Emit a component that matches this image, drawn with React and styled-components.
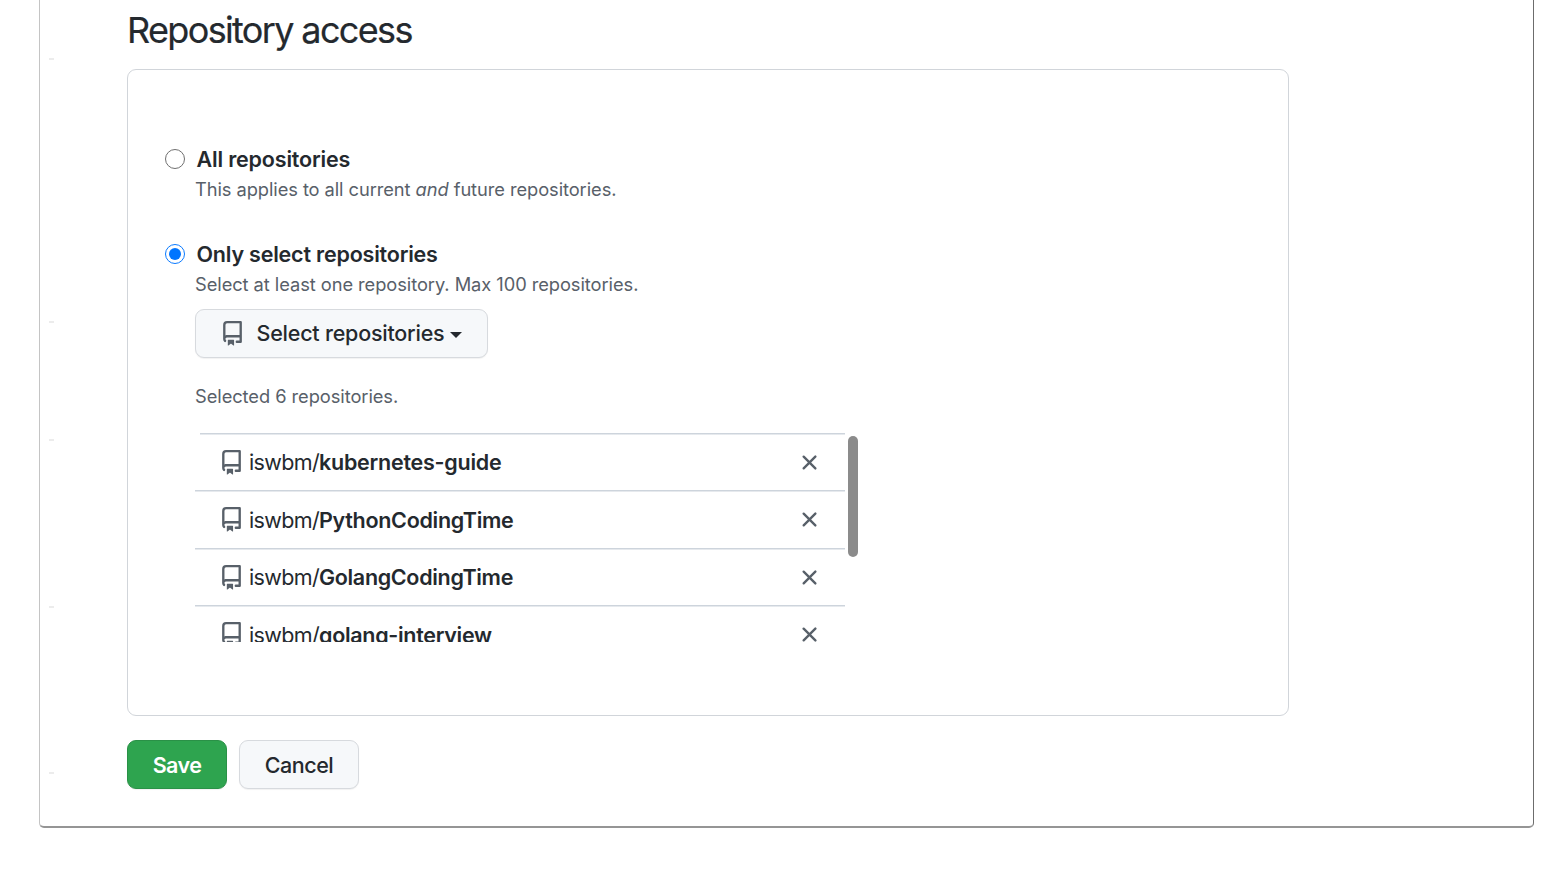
import React from "react";
import styled, { createGlobalStyle } from "styled-components";

const GlobalStyle = createGlobalStyle`
  *, *::before, *::after { box-sizing: border-box; }
  body {
    margin: 0;
    background: #fff;
    color: #24292e;
    font-family: Inter, "Liberation Sans", sans-serif;
    -webkit-font-smoothing: antialiased;
  }
  h2, p, ul { margin: 0; padding: 0; }
`;

const Page = styled.main`
  height: 875px;
  padding: 0 28px 0 39px;
  overflow: hidden;
`;

const Frame = styled.section`
  display: flex;
  height: 828px;
  border: 1px solid #c4c4c4;
  border-top: 0;
  border-right-color: #6c6c6c;
  border-bottom: 2px solid #959595;
  border-radius: 0 0 5px 5px;
`;

const Rail = styled.div`
  width: 87px;
  padding-left: 9px;
`;

const Tick = styled.div`
  width: 5px;
  height: 2px;
  margin-top: ${(p) => p.$gap}px;
  background: #ececec;
`;

const Content = styled.div`
  width: 1162px;
`;

const Title = styled.h2`
  height: 69px;
  padding-top: 7px;
  font-size: 36px;
  font-weight: 400;
  line-height: 46px;
  letter-spacing: -1.65px;
  -webkit-text-stroke: 0.2px #24292e;
`;

const Panel = styled.div`
  height: 647px;
  padding: 71.5px 37px 0 36.5px;
  border: 1px solid #d1d5da;
  border-radius: 9px;
`;

const Option = styled.label`
  display: flex;
  align-items: center;
  gap: 12px;
  height: 34px;
  font-size: 21.5px;
  font-weight: 600;
  letter-spacing: ${(p) => p.$spacing}px;
`;

const Radio = styled.span`
  display: flex;
  align-items: center;
  justify-content: center;
  width: 20px;
  height: 20px;
  border: ${(p) => (p.$checked ? "1.5px solid #0a7aff" : "1.2px solid #6f6f6f")};
  border-radius: 50%;

  &::after {
    content: "";
    width: 12px;
    height: 12px;
    border-radius: 50%;
    background: ${(p) => (p.$checked ? "#0075ff" : "transparent")};
  }
`;

const Note = styled.p`
  height: 26px;
  margin-left: 30.5px;
  color: #586069;
  font-size: 18.3px;
  line-height: 26px;
  letter-spacing: ${(p) => p.$spacing}px;
  white-space: nowrap;
`;

const Gap = styled.div`
  height: ${(p) => p.$size}px;
`;

const Button = styled.button`
  display: flex;
  align-items: center;
  justify-content: center;
  width: ${(p) => p.$width}px;
  height: ${(p) => p.$height || 49}px;
  padding: 0;
  border: 1px solid ${(p) => (p.$primary ? "#2a9147" : "#d7dade")};
  border-radius: 9px;
  background: ${(p) => (p.$primary ? "#2ea44f" : "#f6f8fa")};
  box-shadow: 0 1px 1px rgba(27, 31, 35, 0.06);
  color: ${(p) => (p.$primary ? "#fff" : "#24292e")};
  font: ${(p) => (p.$primary ? 600 : 500)} 21.5px Inter, "Liberation Sans", sans-serif;
  letter-spacing: ${(p) => p.$spacing || 0}px;
`;

const SelectButton = styled(Button)`
  margin: 12px 0 25px 30.5px;
  justify-content: flex-start;
  padding-left: 24px;

  svg { margin-right: 11.5px; }
`;

const Caret = styled.span`
  margin: 3px 0 0 5.5px;
  border: 6px solid transparent;
  border-top-color: #24292e;
  border-bottom: 0;
`;

const ListArea = styled.div`
  display: flex;
  gap: 3px;
  height: 209px;
  margin: 24px 0 0 30.5px;
  overflow: hidden;
`;

const RepoList = styled.ul`
  width: 650px;
  height: 209px;
  overflow: hidden;
  list-style: none;
`;

const RepoRow = styled.li`
  display: flex;
  align-items: center;
  height: 57.5px;
  padding: 2px 23.5px 0 24px;
  background: linear-gradient(#cdd4dc, #cdd4dc) ${(p) => (p.$first ? 5 : 0)}px 0 / 100% 1.5px no-repeat;
`;

const RepoName = styled.span`
  flex: 1;
  margin-left: 5px;
  font-size: 21.5px;
  letter-spacing: -0.65px;
  white-space: nowrap;

  b {
    font-weight: 600;
    letter-spacing: ${(p) => p.$spacing}px;
  }
`;

const Thumb = styled.div`
  width: 10px;
  height: 121px;
  margin-top: 3px;
  border-radius: 5px;
  background: #8b8b8b;
`;

const Actions = styled.div`
  display: flex;
  gap: 12px;
  margin-top: 24px;
`;

const Icon = styled.svg`
  flex: none;
  width: 25px;
  height: 25px;
  fill: #586069;
`;

const RepoIcon = () => (
  <Icon viewBox="0 0 16 16">
    <path fillRule="evenodd" d="M2 2.5A2.5 2.5 0 014.5 0h8.75a.75.75 0 01.75.75v12.5a.75.75 0 01-.75.75h-2.5a.75.75 0 110-1.5h1.75v-2h-8a1 1 0 00-.714 1.7.75.75 0 01-1.072 1.05A2.495 2.495 0 012 11.5v-9zm10.5-1V9h-8c-.356 0-.694.074-1 .208V2.5a1 1 0 011-1h8zM5 12.25v3.25a.25.25 0 00.4.2l1.45-1.087a.25.25 0 01.3 0L8.6 15.7a.25.25 0 00.4-.2v-3.25a.25.25 0 00-.25-.25h-3.5a.25.25 0 00-.25.25z" />
  </Icon>
);

const CloseIcon = () => (
  <Icon viewBox="0 0 16 16">
    <path fillRule="evenodd" d="M3.72 3.72a.75.75 0 011.06 0L8 6.94l3.22-3.22a.75.75 0 111.06 1.06L9.06 8l3.22 3.22a.75.75 0 11-1.06 1.06L8 9.06l-3.22 3.22a.75.75 0 01-1.06-1.06L6.94 8 3.72 4.78a.75.75 0 010-1.06z" />
  </Icon>
);

const ticks = [58, 261, 116, 165, 164];

const repos = [
  { name: "kubernetes-guide", spacing: -0.25 },
  { name: "PythonCodingTime", spacing: -0.3 },
  { name: "GolangCodingTime", spacing: -0.32 },
  { name: "golang-interview", spacing: -0.3 },
];

export default function App() {
  return (
    <Page>
      <GlobalStyle />
      <Frame>
        <Rail>
          {ticks.map((gap) => (
            <Tick key={gap} $gap={gap} />
          ))}
        </Rail>
        <Content>
          <Title>Repository access</Title>
          <Panel>
            <Option $spacing={-0.17}>
              <Radio />
              All repositories
            </Option>
            <Note $spacing={-0.07}>
              This applies to all current <em>and</em> future repositories.
            </Note>
            <Gap $size={35.5} />
            <Option $spacing={-0.2}>
              <Radio $checked />
              Only select repositories
            </Option>
            <Note $spacing={-0.06}>Select at least one repository. Max 100 repositories.</Note>
            <SelectButton $width={293} $height={48.5} $spacing={-0.22}>
              <RepoIcon />
              Select repositories
              <Caret />
            </SelectButton>
            <Note $spacing={-0.06}>Selected 6 repositories.</Note>
            <ListArea>
              <RepoList>
                {repos.map((repo, i) => (
                  <RepoRow key={repo.name} $first={i === 0}>
                    <RepoIcon />
                    <RepoName $spacing={repo.spacing}>
                      iswbm/<b>{repo.name}</b>
                    </RepoName>
                    <CloseIcon />
                  </RepoRow>
                ))}
              </RepoList>
              <Thumb />
            </ListArea>
          </Panel>
          <Actions>
            <Button $primary $width={100} $spacing={-0.6}>Save</Button>
            <Button $width={120} $spacing={-0.45}>Cancel</Button>
          </Actions>
        </Content>
      </Frame>
    </Page>
  );
}
